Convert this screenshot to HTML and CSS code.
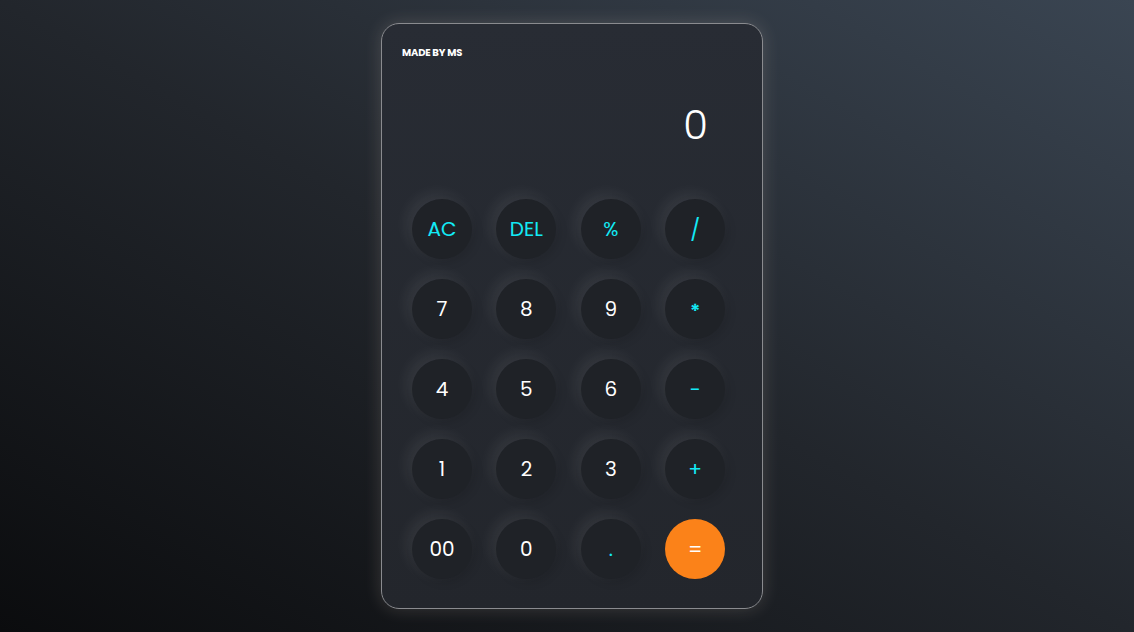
FILE: index.html
```html
<!DOCTYPE html>
<html lang="en">
<head>
<meta charset="utf-8">
<title>Calculator</title>
<link rel="stylesheet" href="styles.css">
</head>
<body>
<main class="stage">
  <section class="calc">
    <div class="brand">MADE BY MS</div>
    <div class="display">0</div>
    <div class="keys">
      <button class="key op">AC</button>
      <button class="key op">DEL</button>
      <button class="key op">%</button>
      <button class="key op slash">/</button>
      <button class="key">7</button>
      <button class="key">8</button>
      <button class="key">9</button>
      <button class="key op star">*</button>
      <button class="key">4</button>
      <button class="key">5</button>
      <button class="key">6</button>
      <button class="key op">-</button>
      <button class="key">1</button>
      <button class="key">2</button>
      <button class="key">3</button>
      <button class="key op">+</button>
      <button class="key">00</button>
      <button class="key">0</button>
      <button class="key op">.</button>
      <button class="key equal">=</button>
    </div>
  </section>
</main>
</body>
</html>
```
FILE: styles.css
```css
html, body {
  margin: 0;
  height: 100%;
}
body {
  background: linear-gradient(to top right, #0b0c0e 0%, #22262c 50%, #3a4552 100%);
  font-family: "Poppins", "Inter", "Noto Sans", sans-serif;
}
.stage {
  height: 632px;
  display: flex;
  align-items: center;
  justify-content: center;
  padding-left: 10px;
  box-sizing: border-box;
}
.calc {
  width: 382px;
  height: 586px;
  box-sizing: border-box;
  border: 1px solid #8a8b8f;
  border-radius: 18px;
  background: linear-gradient(to bottom, #282c34, #23262c);
  box-shadow: 0 0 18px rgba(255, 235, 215, 0.16);
  padding: 21px 20px 29px 20px;
  display: flex;
  flex-direction: column;
}
.brand {
  color: #ffffff;
  font-weight: 700;
  font-size: 10px;
  letter-spacing: -0.2px;
  line-height: 16px;
}
.display {
  color: #ffffff;
  font-family: "Poppins", "Inter", sans-serif;
  font-weight: 300;
  font-size: 40px;
  line-height: 50px;
  text-align: right;
  padding-right: 34px;
  margin-top: 39px;
}
.keys {
  margin-top: auto;
  padding-left: 10px;
  display: grid;
  grid-template-columns: repeat(4, 60px);
  grid-auto-rows: 60px;
  column-gap: 24.4px;
  row-gap: 20px;
}
.key {
  width: 60px;
  height: 60px;
  border: none;
  border-radius: 50%;
  background: #1f2227;
  color: #ffffff;
  font-family: "Poppins", "Inter", "Noto Sans", sans-serif;
  font-size: 20px;
  font-weight: 400;
  padding: 0;
  box-shadow: -5px -5px 15px rgba(255, 255, 255, 0.08), 3px 3px 10px rgba(0, 0, 0, 0.12);
}
.op {
  color: #12eaf6;
}
.slash {
  font-size: 21px;
}
.star {
  font-weight: 600;
  padding-top: 3px;
}
.equal {
  background: #fb8219;
  color: #ffffff;
  box-shadow: none;
}
```
